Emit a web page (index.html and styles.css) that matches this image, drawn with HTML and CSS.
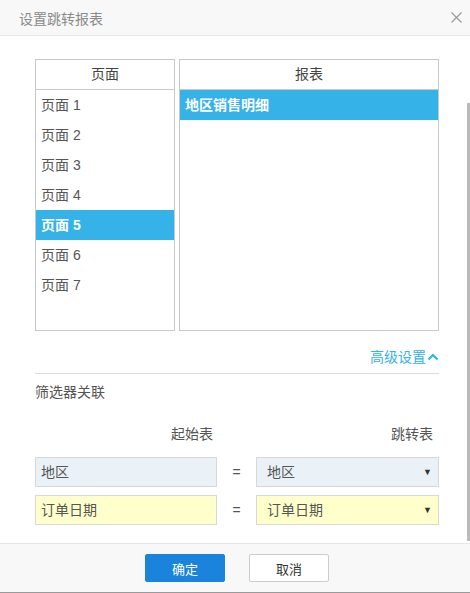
FILE: index.html
```html
<!DOCTYPE html>
<html>

<head>
	<meta charset="utf-8">
	<meta name="viewport" content="width=device-width">
	<title>设置跳转报表</title>
	<link rel="stylesheet" href="styles.css">
</head>

<body>
	<div class="Dialog">
		<div class="Head">
			<span class="HeadTitle">设置跳转报表</span>
			<svg class="Close" width="11" height="11" viewBox="0 0 11 11">
				<path d="M0.5 0.5 L10.5 10.5 M10.5 0.5 L0.5 10.5" stroke="#9a9a9a" stroke-width="1.2" fill="none" />
			</svg>
		</div>
		<div class="Body">
			<div class="Main">
				<div class="Lists">
					<div class="Box Pages">
						<div class="BoxHead">页面</div>
						<div class="Item">页面 1</div>
						<div class="Item">页面 2</div>
						<div class="Item">页面 3</div>
						<div class="Item">页面 4</div>
						<div class="Item Sel">页面 5</div>
						<div class="Item">页面 6</div>
						<div class="Item">页面 7</div>
					</div>
					<div class="Box Reports">
						<div class="BoxHead">报表</div>
						<div class="Item Sel">地区销售明细</div>
					</div>
				</div>
				<div class="Adv">
					<span>高级设置</span>
					<svg width="12" height="8" viewBox="0 0 12 8">
						<path d="M1.5 6.5 L6 2 L10.5 6.5" stroke="#35b2e7" stroke-width="2.2" fill="none" />
					</svg>
				</div>
				<div class="Filter">筛选器关联</div>
				<div class="Grid">
					<div class="Lbl">起始表</div>
					<div></div>
					<div class="Lbl LblR">跳转表</div>

					<div class="Field Blue">地区</div>
					<div class="Eq">=</div>
					<div class="Field Blue Drop">地区<span class="Arrow">▼</span></div>

					<div class="Field Yellow">订单日期</div>
					<div class="Eq">=</div>
					<div class="Field Yellow Drop">订单日期<span class="Arrow">▼</span></div>
				</div>
			</div>
			<div class="Track">
				<div class="Thumb"></div>
			</div>
		</div>
		<div class="Foot">
			<button class="Btn Ok">确定</button>
			<button class="Btn Cancel">取消</button>
		</div>
	</div>
</body>

</html>
```

FILE: styles.css
```css
html, body {
	margin: 0;
	padding: 0;
	width: 470px;
	height: 593px;
	overflow: hidden;
	font-family: "Liberation Sans", "Noto Sans CJK SC", sans-serif;
	font-size: 14px;
	color: #555;
	background: #fff;
}

.Dialog {
	height: 592px;
	display: flex;
	flex-direction: column;
	border-bottom: 1px solid #9a9a9a;
}

.Head {
	height: 35px;
	background: #f8f8f8;
	border-bottom: 1px solid #e8e8e8;
	display: flex;
	align-items: center;
	justify-content: space-between;
	padding: 0 8px 0 19px;
}
.HeadTitle {
	color: #8a8a8a;
	font-size: 14px;
}
.Close {
	margin-right: 0;
}

.Body {
	height: 507px;
	display: flex;
	border-bottom: 1px solid #e6e6e6;
}
.Main {
	flex: 1;
	padding: 23px 28px 0 35px;
}
.Track {
	width: 3px;
	padding-top: 67px;
}
.Thumb {
	height: 438px;
	background: #bbb;
}

.Lists {
	display: flex;
	gap: 4px;
	height: 272px;
}
.Box {
	border: 1px solid #c8c8c8;
	background: #fff;
}
.Pages {
	width: 138px;
}
.Reports {
	flex: 1;
}
.BoxHead {
	height: 29px;
	line-height: 29px;
	text-align: center;
	color: #444;
	border-bottom: 1px solid #c8c8c8;
}
.Item {
	height: 30px;
	line-height: 30px;
	padding-left: 5px;
	color: #555;
}
.Sel {
	background: #35b2e7;
	color: #fff;
	font-weight: bold;
}

.Adv {
	margin-top: 18px;
	height: 16px;
	padding-bottom: 8px;
	border-bottom: 1px solid #dedede;
	display: flex;
	align-items: center;
	justify-content: flex-end;
	gap: 1px;
	color: #35b2e7;
	line-height: 16px;
}

.Filter {
	margin-top: 10px;
	line-height: 16px;
	color: #555;
}

.Grid {
	margin-top: 26px;
	display: grid;
	grid-template-columns: 182px 1fr 183px;
	row-gap: 8px;
}
.Lbl {
	text-align: right;
	line-height: 16px;
	padding-right: 4px;
	color: #555;
	margin-bottom: 7px;
}
.LblR {
	padding-right: 6px;
}
.Field {
	height: 28px;
	line-height: 28px;
	border: 1px solid #d8d8d8;
	padding-left: 5px;
	color: #555;
}
.Drop {
	padding-left: 10px;
	display: flex;
	justify-content: space-between;
}
.Arrow {
	font-size: 9px;
	color: #333;
	padding-right: 6px;
}
.Blue {
	background: #eaf2f8;
}
.Yellow {
	background: #ffffcc;
}
.Eq {
	text-align: center;
	line-height: 30px;
	color: #555;
}

.Foot {
	flex: 1;
	background: #f8f8f8;
	display: flex;
	justify-content: center;
	align-items: flex-start;
	gap: 24px;
	padding-top: 10px;
	padding-left: 4px;
}
.Btn {
	width: 80px;
	height: 28px;
	border-radius: 2px;
	font-family: "Liberation Sans", "Noto Sans CJK SC", sans-serif;
	font-size: 13px;
	cursor: pointer;
}
.Ok {
	background: #1a83dc;
	border: 1px solid #1a83dc;
	color: #fff;
}
.Cancel {
	background: #fff;
	border: 1px solid #ccc;
	color: #333;
}
```
